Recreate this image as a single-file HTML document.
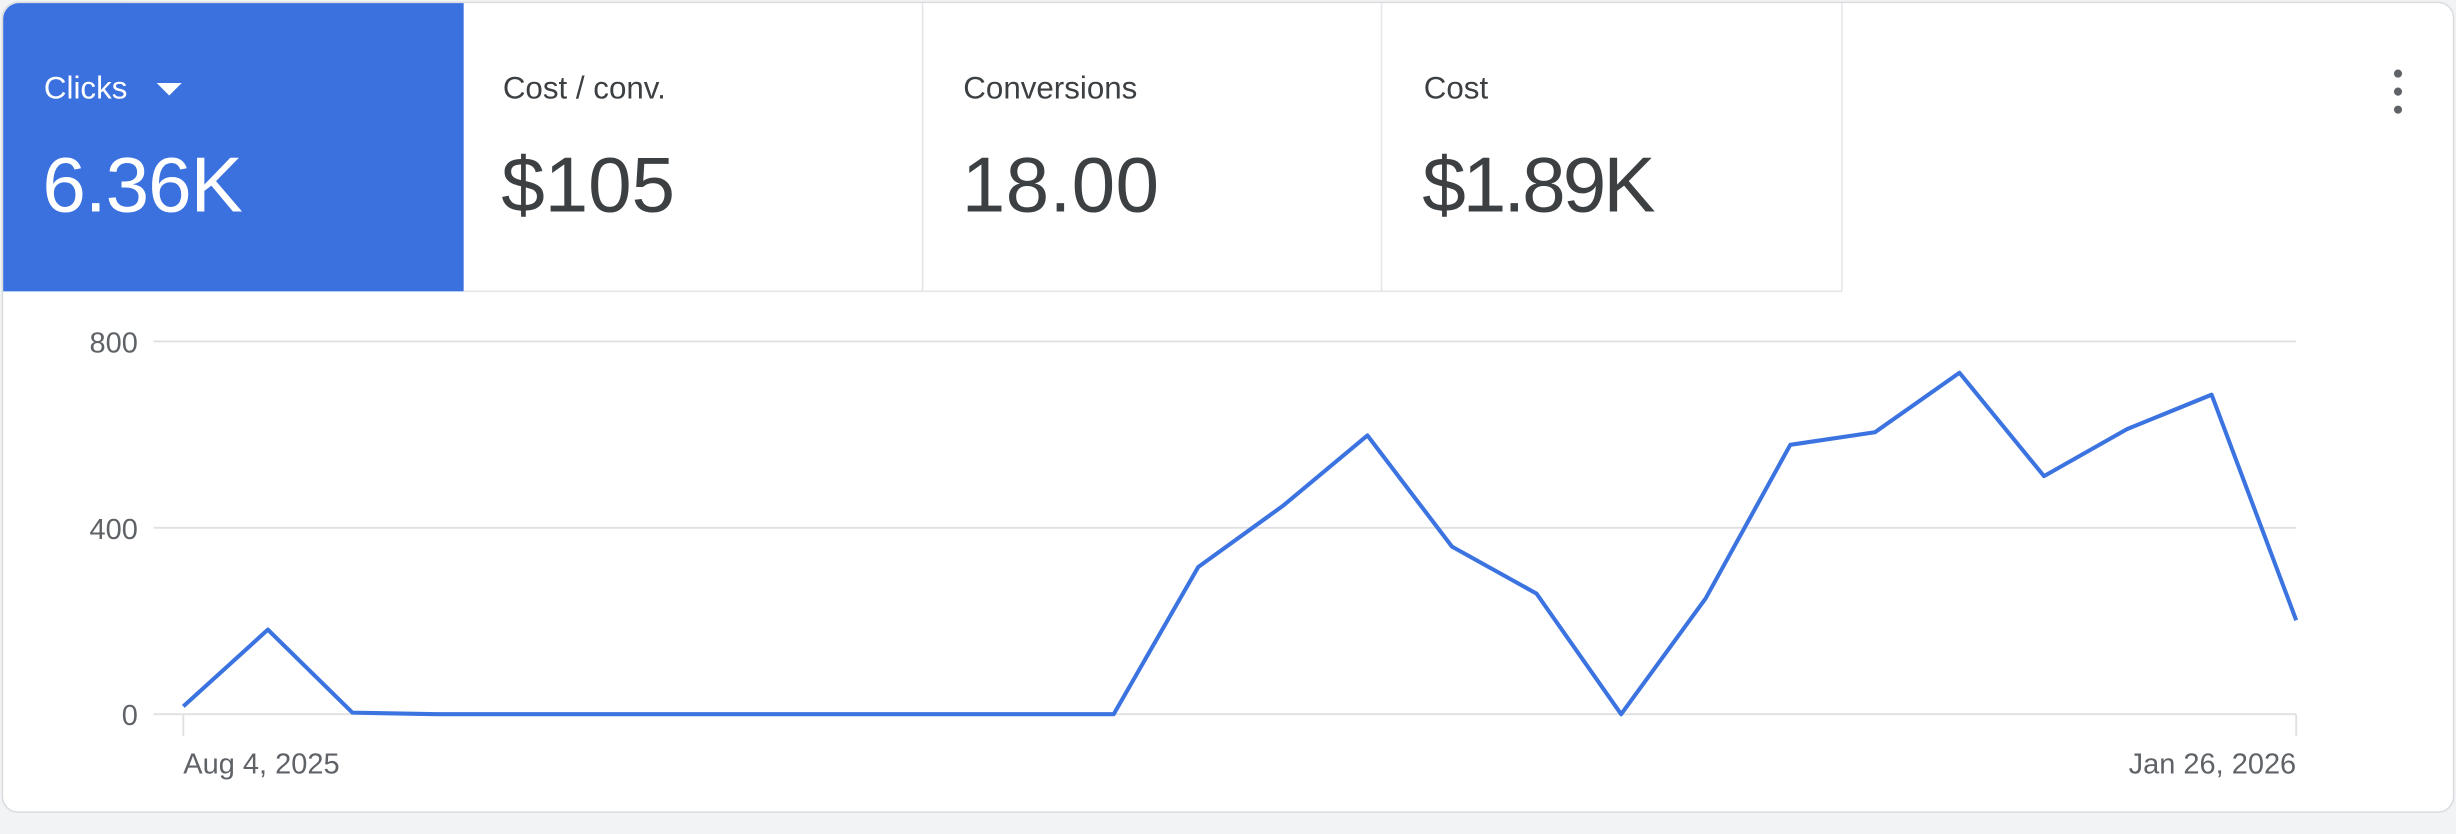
<!DOCTYPE html>
<html><head><meta charset="utf-8"><style>
html,body{margin:0;padding:0;background:#f1f3f4;width:2456px;height:834px;overflow:hidden}
svg{display:block}
text{font-family:"Liberation Sans",Arial,sans-serif}
</style></head><body>
<svg width="2456" height="834" viewBox="0 0 1568 532.48" xmlns="http://www.w3.org/2000/svg">
<rect x="0" y="0" width="1568" height="533" fill="#f1f3f4"/>
<rect x="1.5" y="1.5" width="1565" height="517" rx="10" fill="#fff" stroke="#dadce0" stroke-width="1"/>
<path d="M2 186 V12 A10 10 0 0 1 12 2 H296 V186 Z" fill="#3a71df"/>
<g stroke="#e3e5e8" stroke-width="1" fill="none">
<line x1="589" y1="2" x2="589" y2="186"/>
<line x1="882" y1="2" x2="882" y2="186"/>
<line x1="1176" y1="2" x2="1176" y2="186"/>
<line x1="296" y1="186" x2="1176" y2="186"/>
</g>
<text x="28" y="63" font-size="20" fill="#fff">Clicks</text>
<path d="M100 53 L116 53 L108 61 Z" fill="#fff"/>
<text x="27" y="135" font-size="50" fill="#fff" textLength="128">6.36K</text>
<text x="321" y="63" font-size="20" fill="#3c4043">Cost / conv.</text>
<text x="320" y="135" font-size="50" fill="#3c4043" textLength="111">$105</text>
<text x="615" y="63" font-size="20" fill="#3c4043">Conversions</text>
<text x="614" y="135" font-size="50" fill="#3c4043" textLength="126">18.00</text>
<text x="909" y="63" font-size="20" fill="#3c4043">Cost</text>
<text x="908" y="135" font-size="50" fill="#3c4043" textLength="149">$1.89K</text>
<g fill="#5f6368"><circle cx="1531" cy="47" r="2.6"/><circle cx="1531" cy="58.5" r="2.6"/><circle cx="1531" cy="70" r="2.6"/></g>
<g stroke="#e0e0e0" stroke-width="1.2">
<line x1="98" y1="218" x2="1466" y2="218"/>
<line x1="98" y1="337" x2="1466" y2="337"/>
<line x1="98" y1="456" x2="1466" y2="456"/>
<line x1="117" y1="456" x2="117" y2="470"/>
<line x1="1466" y1="456" x2="1466" y2="470"/>
</g>
<g font-size="18.5" fill="#5f6368" text-anchor="end">
<text x="88" y="225">800</text>
<text x="88" y="344">400</text>
<text x="88" y="463">0</text>
</g>
<text x="117" y="494" font-size="18.5" fill="#5f6368">Aug 4, 2025</text>
<text x="1466" y="494" font-size="18.5" fill="#5f6368" text-anchor="end">Jan 26, 2026</text>
<polyline fill="none" stroke="#3b73e0" stroke-width="2.6" stroke-linejoin="round" points="117,451 171,402 225,455 279,456 333,456 387,456 441,456 495,456 549,456 603,456 657,456 711,456 765,362 819,323 873,278 927,349 981,379 1035,456 1089,382 1143,284 1197,276 1251,238 1305,304 1358,274 1412,252 1466,396"/>
</svg>
</body></html>
